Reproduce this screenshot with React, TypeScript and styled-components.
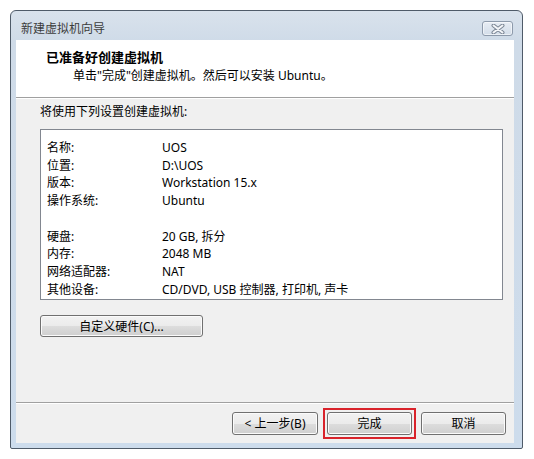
import { Fragment } from 'react';
import styled, { createGlobalStyle } from 'styled-components';

const GlobalStyle = createGlobalStyle`
    body {
        margin: 0;
        background: #ffffff;
        font-family: "Noto Sans", "Noto Sans CJK SC", sans-serif;
        font-size: 12px;
        color: #000;
    }
`

const settings: [string, string][][] = [
    [
        ['名称:', 'UOS'],
        ['位置:', 'D:\\UOS'],
        ['版本:', 'Workstation 15.x'],
        ['操作系统:', 'Ubuntu'],
    ],
    [
        ['硬盘:', '20 GB, 拆分'],
        ['内存:', '2048 MB'],
        ['网络适配器:', 'NAT'],
        ['其他设备:', 'CD/DVD, USB 控制器, 打印机, 声卡'],
    ],
]

const Window = styled.div`
    box-sizing: border-box;
    margin: 10px 0 0 10px;
    width: 513px;
    height: 439px;
    border: 1px solid #4f5b69;
    border-radius: 6px 6px 2px 2px;
    background: linear-gradient(180deg, #d9e2ec 0px, #cfdbe8 30px, #cddcec 100%);
    display: flex;
    flex-direction: column;
`

const TitleBar = styled.div`
    height: 29px;
    flex-shrink: 0;
    display: flex;
    align-items: flex-start;
    justify-content: space-between;
    padding: 10px 9px 0 10px;
    box-sizing: border-box;
`

const Title = styled.span`
    line-height: 16px;
    color: #3c3c3c;
`

const CloseButton = styled.div`
    width: 31px;
    height: 15px;
    box-sizing: border-box;
    border: 1px solid #8d9aab;
    border-radius: 3px;
    background: linear-gradient(180deg, #e7edf4, #d3dde9);
    box-shadow: inset 0 0 0 1px rgba(255, 255, 255, 0.55);
    display: flex;
    align-items: center;
    justify-content: center;
`

const Client = styled.div`
    flex: 1;
    margin: 0 8px 5px 5px;
    background: #f0f0f0;
    display: flex;
    flex-direction: column;
`

const Header = styled.div`
    height: 58px;
    flex-shrink: 0;
    box-sizing: border-box;
    background: #ffffff;
    border-bottom: 1px solid #a0a0a0;
    padding: 9px 0 0 30px;
`

const Heading = styled.div`
    font-size: 13px;
    font-weight: bold;
    line-height: 16px;
`

const SubHeading = styled.div`
    line-height: 16px;
    margin-top: 3px;
    padding-left: 27px;
`

const Body = styled.div`
    flex: 1;
    border-top: 1px solid #ffffff;
    padding: 5px 11px 0 24px;
    display: flex;
    flex-direction: column;
    align-items: flex-start;
`

const Caption = styled.div`
    line-height: 16px;
`

const SummaryBox = styled.div`
    box-sizing: border-box;
    margin-top: 9px;
    align-self: stretch;
    height: 171px;
    background: #ffffff;
    border: 1px solid #828790;
    padding: 9px 6px 0;
`

const Group = styled.div`
    display: grid;
    grid-template-columns: 115px 1fr;
    line-height: 17.7px;
    & + & {
        margin-top: 17.7px;
    }
`

const Button = styled.button<{ $width: number }>`
    box-sizing: border-box;
    width: ${p => p.$width}px;
    height: 23px;
    padding: 0;
    font: inherit;
    color: #000;
    border: 1px solid #707070;
    border-radius: 3px;
    background: linear-gradient(180deg, #f2f2f2 0%, #ebebeb 50%, #dddddd 50%, #cfcfcf 100%);
    box-shadow: inset 0 0 0 1px #fbfbfb;
`

const CustomButton = styled(Button)`
    margin-top: 15px;
    height: 22px;
`

const Footer = styled.div`
    height: 41px;
    flex-shrink: 0;
    box-sizing: border-box;
    border-top: 1px solid #a0a0a0;
    box-shadow: inset 0 1px 0 #ffffff;
    display: flex;
    align-items: center;
    justify-content: flex-end;
    gap: 5px;
    padding: 0 8px 0 0;
`

const Highlight = styled.div`
    border: 2px solid #d9232b;
    padding: 2px;
    display: flex;
`

function CloseGlyph() {
    return (
        <svg width="14" height="10" viewBox="0 0 14 10">
            <path d="M2.5 1.5 L11.5 8.5 M11.5 1.5 L2.5 8.5" stroke="#7d8896" strokeWidth="4" strokeLinecap="round" />
            <path d="M2.5 1.5 L11.5 8.5 M11.5 1.5 L2.5 8.5" stroke="#f4f6f9" strokeWidth="2" strokeLinecap="round" />
        </svg>
    )
}

export default function App() {
    return (
        <>
            <GlobalStyle />
            <Window>
                <TitleBar>
                    <Title>新建虚拟机向导</Title>
                    <CloseButton><CloseGlyph /></CloseButton>
                </TitleBar>
                <Client>
                    <Header>
                        <Heading>已准备好创建虚拟机</Heading>
                        <SubHeading>单击"完成"创建虚拟机。然后可以安装 Ubuntu。</SubHeading>
                    </Header>
                    <Body>
                        <Caption>将使用下列设置创建虚拟机:</Caption>
                        <SummaryBox>
                            {settings.map((group, i) => (
                                <Group key={i}>
                                    {group.map(([label, value]) => (
                                        <Fragment key={label}>
                                            <span>{label}</span>
                                            <span>{value}</span>
                                        </Fragment>
                                    ))}
                                </Group>
                            ))}
                        </SummaryBox>
                        <CustomButton $width={163}>自定义硬件(C)...</CustomButton>
                    </Body>
                    <Footer>
                        <Button $width={86}>&lt; 上一步(B)</Button>
                        <Highlight>
                            <Button $width={85}>完成</Button>
                        </Highlight>
                        <Button $width={85}>取消</Button>
                    </Footer>
                </Client>
            </Window>
        </>
    )
}
